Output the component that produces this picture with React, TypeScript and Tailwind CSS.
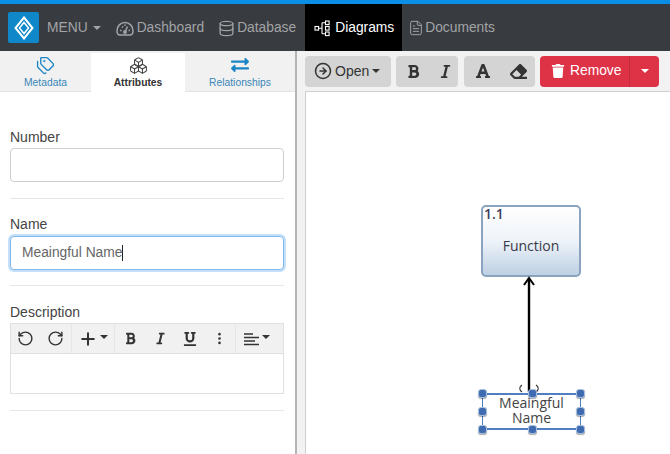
import React from "react";
import { Database, FileText, RotateCcw, RotateCw, Plus, EllipsisVertical, CircleArrowRight, Tags, Boxes } from "lucide-react";
import { FaExchangeAlt, FaBold, FaItalic, FaFont, FaEraser, FaTrash, FaUnderline } from "react-icons/fa";

const Caret = ({ className = "" }: { className?: string }) => (
  <span className={"inline-block w-0 h-0 border-x-[4px] border-x-transparent border-t-[4px] " + className} />
);

const GaugeIcon = () => (
  <svg width="18" height="15" viewBox="0 0 18 15" fill="none" stroke="#a2a4a6" strokeWidth="1.5">
    <path d="M4 14C2 14 1 12.5 1 10C1 5 4.5 1.5 9 1.5C13.5 1.5 17 5 17 10C17 12.5 16 14 14 14Z" />
    <path d="M9 11L11.5 5.5M4 9.5H5.5M12.5 9.5H14M6 5.5L7 6.5M9 3.5V5" />
    <circle cx="9" cy="11" r="1.2" fill="#a2a4a6" />
  </svg>
);

const DiagramIcon = () => (
  <svg width="17" height="17" viewBox="0 0 17 17" fill="none" stroke="white" strokeWidth="1.1">
    <rect x="1" y="6.5" width="3.6" height="3.6" />
    <rect x="11.5" y="1" width="3.6" height="3.6" />
    <rect x="11.5" y="6.5" width="3.6" height="3.6" />
    <rect x="11.5" y="12" width="3.6" height="3.6" />
    <path d="M4.6 8.3H8M8 2.8V13.8M8 2.8H11.5M8 13.8H11.5" />
  </svg>
);

const Logo = () => (
  <svg width="20" height="24" viewBox="0 0 20 24" fill="none" stroke="white" strokeWidth="2">
    <path d="M10 1.5L18.5 12L10 22.5L1.5 12Z" />
    <path d="M10 6.5L14.5 12L10 17.5L5.5 12Z" strokeWidth="1.5" />
  </svg>
);

const Handle = ({ className }: { className: string }) => (
  <span className={"absolute w-[9px] h-[9px] rounded-[3px] bg-[#3f6cb0] border border-[#a9c0e0] shadow-[0_1px_1px_rgba(0,0,0,0.35)] " + className} />
);

const Hr = ({ className = "" }: { className?: string }) => <div className={"h-px bg-[#e6e6e6] " + className} />;

export default function App() {
  return (
    <div className="w-[670px] h-[454px] overflow-hidden bg-white flex flex-col font-['Liberation_Sans',Arial,sans-serif]">
      <div className="h-[4px] bg-[#0b8fe6] shrink-0" />
      {/* navigation */}
      <div className="h-[47px] shrink-0 bg-[#383b40] flex items-center text-[13.8px] text-[#a2a4a6]">
        <div className="ml-[8px] w-[31px] h-[31px] bg-[#0f87c9] rounded-[2px] flex items-center justify-center">
          <Logo />
        </div>
        <div className="ml-[8px] flex items-center gap-[5px] pt-[1px]">
          <span>MENU</span>
          <Caret className="border-t-[#a2a4a6]" />
        </div>
        <div className="ml-[15px] flex items-center gap-[3px] pt-[1px]">
          <GaugeIcon />
          <span>Dashboard</span>
        </div>
        <div className="ml-[14px] flex items-center gap-[2px] pt-[1px]">
          <Database size={17} strokeWidth={1.8} />
          <span>Database</span>
        </div>
        <div className="ml-[9px] h-full w-[97px] bg-black text-white flex items-center pl-[9px] gap-[4px] pt-[1px]">
          <DiagramIcon />
          <span>Diagrams</span>
        </div>
        <div className="ml-[6px] flex items-center gap-[1px] pt-[1px]">
          <FileText size={16} strokeWidth={1.5} />
          <span>Documents</span>
        </div>
      </div>

      <div className="flex-1 flex min-h-0">
        {/* left panel */}
        <div className="w-[295px] shrink-0 flex flex-col">
          <div className="h-[41px] bg-[#f1f1f1] flex pt-[2px] border-b border-[#e2e2e2] text-[10.3px]">
            <div className="w-[91px] flex flex-col items-center text-[#3a87b8] pt-[3px]">
              <Tags size={19} strokeWidth={1.7} className="text-[#1a84c4]" />
              <span className="mt-[2px] leading-[12px]">Metadata</span>
            </div>
            <div className="w-[94px] h-[40px] bg-white flex flex-col items-center text-[#333] pt-[3px] font-bold">
              <Boxes size={19} strokeWidth={1.3} className="text-[#444]" />
              <span className="mt-[2px] leading-[12px]">Attributes</span>
            </div>
            <div className="w-[110px] flex flex-col items-center text-[#3a87b8] pt-[3px]">
              <FaExchangeAlt size={18} className="text-[#1a84c4]" />
              <span className="mt-[3px] leading-[12px]">Relationships</span>
            </div>
          </div>
          <div className="pl-[10px] pr-[11px] pt-[37px] text-[14px] text-[#444]">
            <label className="block leading-[16px]">Number</label>
            <div className="mt-[3px] h-[34px] border border-[#cfcfcf] rounded-[4px] bg-white" />
            <Hr className="mt-[16px]" />
            <label className="block leading-[16px] mt-[17px]">Name</label>
            <div className="mt-[4px] h-[34px] border border-[#82b8ea] rounded-[4px] shadow-[0_0_0_2px_#c4dff8] bg-white flex items-center pl-[11px] text-[13.8px] text-[#666]">
              <span className="border-r border-[#222] leading-[16px]">Meaingful Name</span>
            </div>
            <Hr className="mt-[15px]" />
            <label className="block leading-[16px] mt-[18px]">Description</label>
            <div className="mt-[3px] h-[71px] border border-[#e0e0e0] bg-white">
              <div className="h-[30px] bg-[#f1f1f1] border-b border-[#e0e0e0] flex items-center text-[#333]">
                <div className="w-[61px] h-full flex items-center border-r border-[#e6e6e6] pl-[6px] gap-[13px]">
                  <RotateCcw size={17} strokeWidth={2} />
                  <RotateCw size={17} strokeWidth={2} />
                </div>
                <div className="w-[43px] h-full flex items-center border-r border-[#e6e6e6] pl-[6px] gap-[2px]">
                  <Plus size={20} strokeWidth={2.4} />
                  <Caret className="border-t-[#333] border-x-[3px] border-t-[3px] -mt-[4px]" />
                </div>
                <div className="w-[121px] h-full flex items-center border-r border-[#e6e6e6] pl-[9px]">
                  <FaBold size={13} />
                  <FaItalic size={13} className="ml-[17px]" />
                  <FaUnderline size={14} className="ml-[16px]" />
                  <EllipsisVertical size={15} strokeWidth={2.2} className="ml-[15px]" />
                </div>
                <div className="h-full flex items-center pl-[8px] gap-[2px]">
                  <svg width="16" height="14" viewBox="0 0 16 14" stroke="#333" strokeWidth="1.5"><path d="M0 2H9M0 5.5H15M0 9H11M0 12.5H15" /></svg>
                  <Caret className="border-t-[#333] border-x-[3px] border-t-[3px] -mt-[4px]" />
                </div>
              </div>
            </div>
            <Hr className="mt-[16px]" />
          </div>
        </div>

        {/* splitter */}
        <div className="w-[2px] bg-[#b5b5b5] shrink-0" />

        {/* right panel */}
        <div className="flex-1 flex flex-col bg-[#f2f2f2] min-w-0">
          <div className="h-[40px] shrink-0 flex items-center pl-[8px] text-[14px] text-[#333]">
            <div className="h-[31px] w-[86px] bg-[#d4d4d4] rounded-[4px] flex items-center pl-[9px] gap-[3px]">
              <CircleArrowRight size={18} strokeWidth={2} />
              <span>Open</span>
              <Caret className="border-t-[#333]" />
            </div>
            <div className="ml-[5px] h-[31px] w-[62px] bg-[#d4d4d4] rounded-[4px] flex items-center pl-[10px]">
              <FaBold size={15} />
              <FaItalic size={15} className="ml-[17px]" />
            </div>
            <div className="ml-[6px] h-[31px] w-[71px] bg-[#d4d4d4] rounded-[4px] flex items-center pl-[11px]">
              <FaFont size={16} />
              <FaEraser size={17} className="ml-[19px]" />
            </div>
            <div className="ml-[5px] h-[31px] w-[119px] bg-[#de3247] rounded-[4px] flex items-center text-white text-[13.8px]">
              <div className="w-[90px] h-full flex items-center pl-[11px] gap-[5px] border-r border-[#c52b3e]">
                <FaTrash size={14} />
                <span>Remove</span>
              </div>
              <div className="flex-1 flex items-center justify-center">
                <Caret className="border-t-white" />
              </div>
            </div>
          </div>

          <div className="flex-1 ml-[8px] bg-white border-t border-l border-[#cfcfcf] relative">
            {/* Function node */}
            <div className="absolute left-[175px] top-[113px] w-[100px] h-[72px] rounded-[5px] border-2 border-[#8ba3bf] bg-gradient-to-b from-white via-[#eef3f9] to-[#bdd0e4] text-[#3a3a4a] font-['Open_Sans',sans-serif]">
              <div className="absolute left-[1px] top-[-1px] text-[14px] font-semibold leading-[16px] text-[#3d3d5c]">1.1</div>
              <div className="absolute inset-x-0 top-[30px] text-center text-[14px] leading-[18px]">Function</div>
            </div>
            {/* connector */}
            <svg className="absolute left-[213px] top-[182px]" width="20" height="122" viewBox="0 0 20 122" fill="none" stroke="black">
              <path d="M10 4V118" strokeWidth="2.4" />
              <path d="M5 11L10 4L15 11" strokeWidth="2" />
              <path d="M3 111C0 113 0 116 3 118M17 111C20 113 20 116 17 118" strokeWidth="1.1" stroke="#333" />
            </svg>
            {/* Selected node */}
            <div className="absolute left-[176px] top-[301px] w-[99px] h-[37px] border border-[#4f7fc0] border-y-2">
              <div className="absolute inset-x-0 top-[0px] text-center text-[14px] leading-[15px] text-[#444] font-['Open_Sans',sans-serif]">
                Meaingful<br />Name
              </div>
              <Handle className="left-[-5px] top-[-6px]" />
              <Handle className="left-[45px] top-[-6px]" />
              <Handle className="right-[-5px] top-[-6px]" />
              <Handle className="left-[-5px] top-[12px]" />
              <Handle className="right-[-5px] top-[12px]" />
              <Handle className="left-[-5px] bottom-[-6px]" />
              <Handle className="left-[45px] bottom-[-6px]" />
              <Handle className="right-[-5px] bottom-[-6px]" />
            </div>
          </div>
        </div>
      </div>
    </div>
  );
}
